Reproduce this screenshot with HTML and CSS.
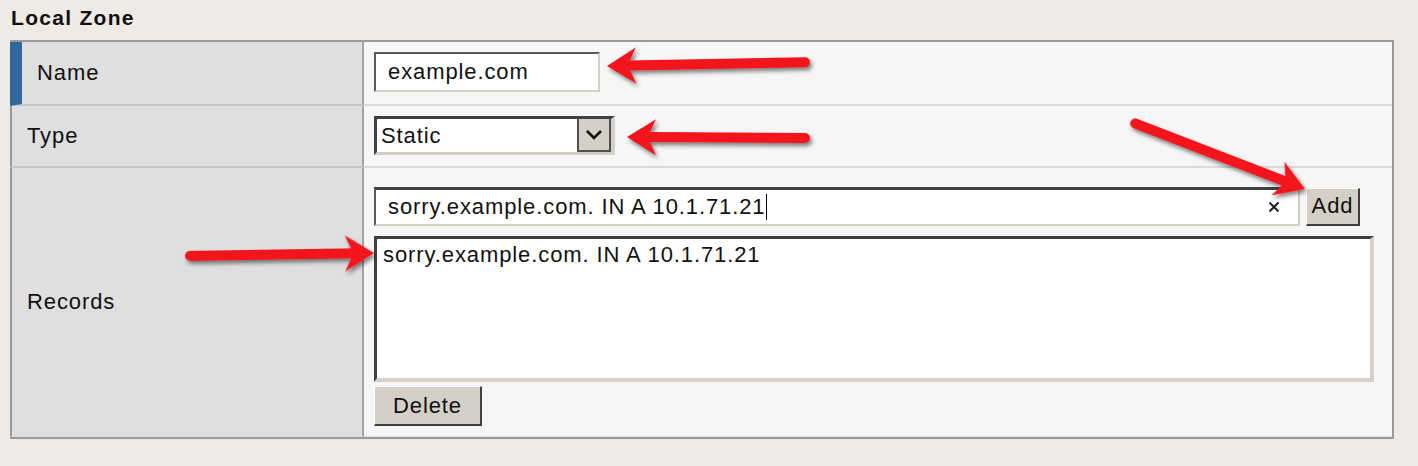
FILE: index.html
```html
<!DOCTYPE html>
<html>
<head>
<meta charset="utf-8">
<title>Local Zone</title>
<link rel="stylesheet" href="styles.css">
</head>
<body>
<div class="title">Local Zone</div>
<div class="panel">
  <div class="row row-name">
    <div class="label label-first">Name</div>
    <div class="value">
      <div class="field field-name">example.com</div>
    </div>
  </div>
  <div class="row row-type">
    <div class="label">Type</div>
    <div class="value">
      <div class="select">
        <span class="select-text">Static</span>
        <span class="select-btn">
          <svg width="18" height="12" viewBox="0 0 18 12"><path d="M2 2 L9 9 L16 2" fill="none" stroke="#111" stroke-width="2.6"/></svg>
        </span>
      </div>
    </div>
  </div>
  <div class="row row-records">
    <div class="label">Records</div>
    <div class="value value-records">
      <div class="entry">
        <div class="field field-record">
          <span class="record-text">sorry.example.com. IN A 10.1.71.21<span class="caret"></span></span>
          <svg class="clear" width="12" height="12" viewBox="0 0 12 12"><path d="M1.5 1.5 L10.5 10.5 M10.5 1.5 L1.5 10.5" stroke="#222" stroke-width="2"/></svg>
        </div>
        <div class="btn btn-add">Add</div>
      </div>
      <div class="list">sorry.example.com. IN A 10.1.71.21</div>
      <div class="btn btn-delete">Delete</div>
    </div>
  </div>
</div>
<svg class="arrows" width="1418" height="466" viewBox="0 0 1418 466">
  <defs>
    <filter id="sh" x="-20%" y="-50%" width="140%" height="200%">
      <feDropShadow dx="2" dy="3" stdDeviation="2" flood-color="#000" flood-opacity="0.5"/>
    </filter>
    <g id="head">
      <polygon points="0,0 -29,-18 -23,-5 -23,5 -29,18" fill="#f2141f"/>
    </g>
  </defs>
  <g filter="url(#sh)">
    <g transform="translate(607,66) rotate(178.9)">
      <line x1="-198" y1="0" x2="-22" y2="0" stroke="#f2141f" stroke-width="10" stroke-linecap="round"/>
      <use href="#head"/>
    </g>
    <g transform="translate(627,137) rotate(180.3)">
      <line x1="-178" y1="0" x2="-22" y2="0" stroke="#f2141f" stroke-width="10" stroke-linecap="round"/>
      <use href="#head"/>
    </g>
    <g transform="translate(1305,189) rotate(21.1)">
      <line x1="-182" y1="0" x2="-22" y2="0" stroke="#f2141f" stroke-width="10" stroke-linecap="round"/>
      <use href="#head"/>
    </g>
    <g transform="translate(374,253) rotate(-0.9)">
      <line x1="-184" y1="0" x2="-22" y2="0" stroke="#f2141f" stroke-width="10" stroke-linecap="round"/>
      <use href="#head"/>
    </g>
  </g>
</svg>
</body>
</html>
```
FILE: styles.css
```css
* { box-sizing: border-box; }
html, body { margin: 0; padding: 0; }
body {
  background: #eeebe6;
  font-family: "Liberation Sans", Arial, sans-serif;
  font-size: 22px;
  letter-spacing: 0.9px;
  color: #111;
  width: 1418px;
  height: 466px;
  overflow: hidden;
  position: relative;
}
.title {
  height: 40px;
  padding: 5px 0 0 11px;
  font-weight: bold;
  font-size: 21px;
  letter-spacing: 1.3px;
  line-height: 26px;
  color: #111;
}
.panel {
  margin-left: 10px;
  width: 1384px;
  border-top: 2px solid #9a9a9a;
  border-right: 2px solid #9a9a9a;
  border-bottom: 2px solid #9a9a9a;
}
.row {
  display: grid;
  grid-template-columns: 354px 1fr;
}
.row-name { height: 64px; }
.row-type { height: 62px; }
.row-records { height: 269px; }
.label {
  background: #dfdfdf;
  border-left: 2px solid #9a9a9a;
  border-right: 2px solid #a4a4a4;
  border-bottom: 2px solid #c6c6c6;
  padding-left: 15px;
  display: flex;
  align-items: center;
}
.label-first { border-left: 12px solid #31679c; }
.value {
  background: #f6f6f6;
  border-bottom: 2px solid #dadada;
  padding: 10px 0 0 10px;
  display: flex;
  align-items: flex-start;
}
.row-records .label,
.row-records .value { border-bottom: 1px solid #dcdcdc; }
.field {
  background: #fff;
  border-top: 2px solid #5a5a5a;
  border-left: 2px solid #5a5a5a;
  border-right: 2px solid #d4d0c8;
  border-bottom: 2px solid #d4d0c8;
  display: flex;
  align-items: center;
}
.field-name {
  width: 226px;
  height: 40px;
  padding-left: 12px;
}
.select {
  width: 241px;
  height: 39px;
  background: #fff;
  border-top: 3px solid #404040;
  border-left: 3px solid #404040;
  border-right: 4px solid #d4d0c8;
  border-bottom: 3px solid #d4d0c8;
  display: flex;
  align-items: stretch;
}
.select-text {
  flex: 1;
  padding-left: 4px;
  display: flex;
  align-items: center;
}
.select-btn {
  width: 34px;
  background: #d4d0c8;
  border-left: 2px solid #505050;
  border-right: 2px solid #505050;
  border-bottom: 2px solid #505050;
  display: flex;
  align-items: center;
  justify-content: center;
}
.value-records {
  padding-top: 19px;
  flex-direction: column;
}
.entry {
  display: flex;
  align-items: center;
  gap: 6px;
}
.field-record {
  width: 926px;
  height: 39px;
  padding-left: 12px;
  padding-right: 18px;
  border-top: 3px solid #404040;
  justify-content: space-between;
}
.record-text { display: flex; align-items: center; }
.caret {
  display: inline-block;
  width: 0;
  height: 26px;
  border-left: 1px solid #000;
  margin-left: 1px;
}
.btn {
  background: #d4d0c8;
  border-top: 1px solid #fff;
  border-left: 1px solid #fff;
  border-right: 2px solid #404040;
  border-bottom: 2px solid #404040;
  display: flex;
  align-items: center;
  justify-content: center;
}
.btn-add { width: 54px; height: 38px; }
.list {
  margin-top: 10px;
  width: 1000px;
  height: 146px;
  background: #fff;
  border-top: 3px solid #404040;
  border-left: 3px solid #404040;
  border-right: 4px solid #d4d0c8;
  border-bottom: 4px solid #d4d0c8;
  padding: 3px 0 0 6px;
  line-height: 26px;
}
.btn-delete {
  margin-top: 4px;
  width: 108px;
  height: 40px;
}
.arrows {
  position: absolute;
  left: 0;
  top: 0;
  pointer-events: none;
}
```
